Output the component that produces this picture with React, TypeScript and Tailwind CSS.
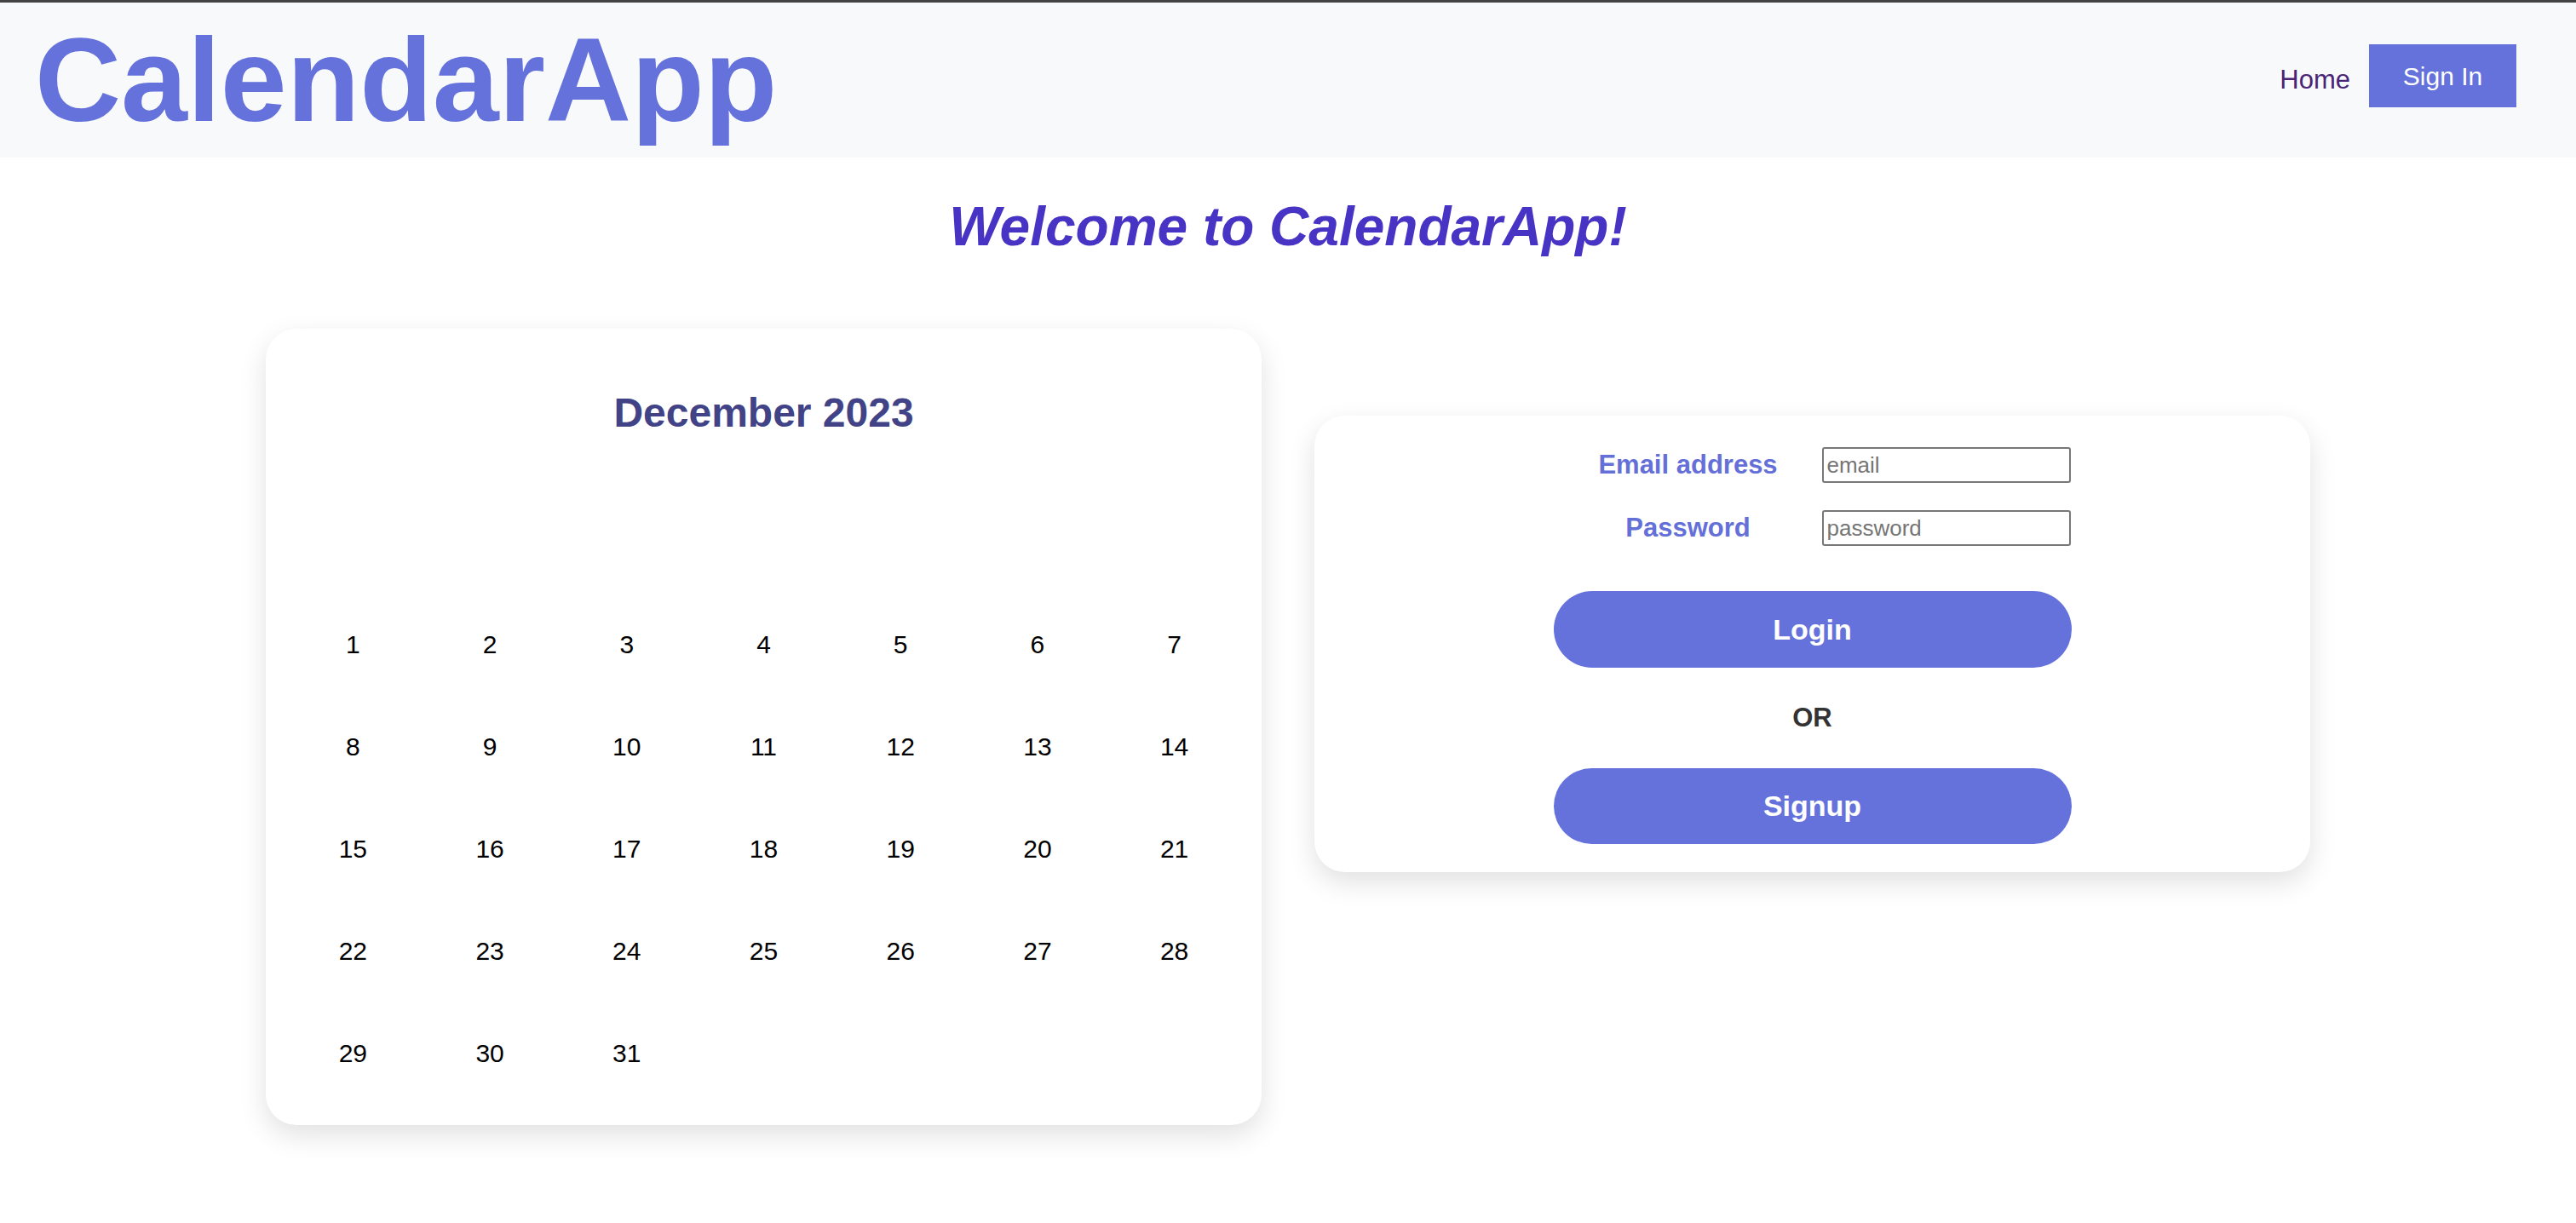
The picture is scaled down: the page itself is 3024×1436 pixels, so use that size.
import React from 'react';

const days = Array.from({ length: 31 }, (_, i) => i + 1);

function Header() {
  return (
    <header className="flex h-[185px] items-center justify-between border-t-[3px] border-[#444] bg-[#f8f9fa] pl-[41px] pr-[70px]">
      <h1 className="text-[140px] font-bold leading-none text-[#6572dc]">CalendarApp</h1>
      <nav className="mb-[10px] flex items-center gap-[22px]">
        <a className="pt-[10px] text-[31px] text-[#4a2577]">Home</a>
        <button className="h-[74px] w-[173px] bg-[#6572dc] text-[30px] text-white">Sign In</button>
      </nav>
    </header>
  );
}

function CalendarCard() {
  return (
    <div className="w-[1169px] rounded-[36px] bg-white px-[22px] pt-[75px] pb-[25px] shadow-[0_12px_32px_rgba(0,0,0,0.12)]">
      <h2 className="text-center text-[48px] font-bold leading-none text-[#414386]">December 2023</h2>
      <div className="mt-[187px] grid grid-cols-7">
        {days.map((d) => (
          <div key={d} className="flex h-[120px] items-center justify-center text-[30px] text-black">
            {d}
          </div>
        ))}
      </div>
    </div>
  );
}

function LoginCard() {
  return (
    <div className="mt-[102px] flex w-[1169px] flex-col items-center rounded-[36px] bg-white pt-[37px] pb-[33px] shadow-[0_12px_32px_rgba(0,0,0,0.12)]">
      <div className="grid w-[606px] grid-cols-[314px_292px] gap-y-[32px]">
        <label className="flex h-[42px] items-center justify-center text-[31px] font-bold text-[#6470d8]">Email address</label>
        <div className="flex items-center">
          <input
            placeholder="email"
            className="h-[42px] w-[292px] rounded-[3px] border-2 border-[#777] px-[4px] text-[26px] outline-none placeholder:text-[#757575]"
          />
        </div>
        <label className="flex h-[42px] items-center justify-center text-[31px] font-bold text-[#6470d8]">Password</label>
        <div className="flex items-center">
          <input
            type="password"
            placeholder="password"
            className="h-[42px] w-[292px] rounded-[3px] border-2 border-[#777] px-[4px] text-[26px] outline-none placeholder:text-[#757575]"
          />
        </div>
      </div>
      <button className="mt-[53px] h-[90px] w-[608px] rounded-full bg-[#6572dc] text-[34px] font-bold text-white">Login</button>
      <div className="flex h-[118px] items-center text-[31px] font-bold text-[#333]">OR</div>
      <button className="h-[89px] w-[608px] rounded-full bg-[#6572dc] text-[34px] font-bold text-white">Signup</button>
    </div>
  );
}

export default function App() {
  return (
    <div className="min-h-[1436px] bg-white font-['Liberation_Sans',Arial,sans-serif]">
      <Header />
      <h1 className="mt-[49px] text-center text-[64px] font-bold italic leading-none text-[#4733c4]">Welcome to CalendarApp!</h1>
      <main className="mt-[88px] flex items-start justify-center gap-[62px]">
        <CalendarCard />
        <LoginCard />
      </main>
    </div>
  );
}
